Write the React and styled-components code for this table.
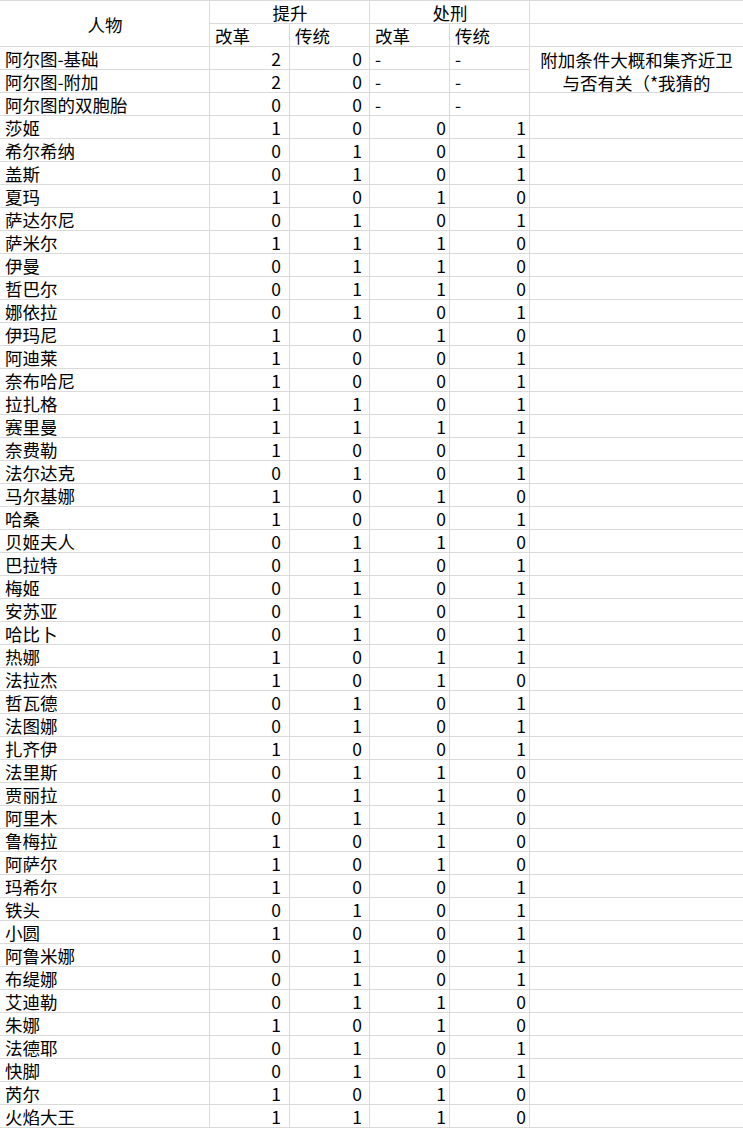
import React from 'react';
import styled, { createGlobalStyle } from 'styled-components';

const GlobalStyle = createGlobalStyle`
  html, body {
    margin: 0;
    padding: 0;
    background: #ffffff;
  }
  body {
    font-family: "Noto Sans CJK SC", "Noto Sans", sans-serif;
    color: #000000;
  }
`;

// 提升改革, 提升传统, 处刑改革, 处刑传统
const rows = [
  ['阿尔图-基础', 2, 0, '-', '-'],
  ['阿尔图-附加', 2, 0, '-', '-'],
  ['阿尔图的双胞胎', 0, 0, '-', '-'],
  ['莎姬', 1, 0, 0, 1],
  ['希尔希纳', 0, 1, 0, 1],
  ['盖斯', 0, 1, 0, 1],
  ['夏玛', 1, 0, 1, 0],
  ['萨达尔尼', 0, 1, 0, 1],
  ['萨米尔', 1, 1, 1, 0],
  ['伊曼', 0, 1, 1, 0],
  ['哲巴尔', 0, 1, 1, 0],
  ['娜依拉', 0, 1, 0, 1],
  ['伊玛尼', 1, 0, 1, 0],
  ['阿迪莱', 1, 0, 0, 1],
  ['奈布哈尼', 1, 0, 0, 1],
  ['拉扎格', 1, 1, 0, 1],
  ['赛里曼', 1, 1, 1, 1],
  ['奈费勒', 1, 0, 0, 1],
  ['法尔达克', 0, 1, 0, 1],
  ['马尔基娜', 1, 0, 1, 0],
  ['哈桑', 1, 0, 0, 1],
  ['贝姬夫人', 0, 1, 1, 0],
  ['巴拉特', 0, 1, 0, 1],
  ['梅姬', 0, 1, 0, 1],
  ['安苏亚', 0, 1, 0, 1],
  ['哈比卜', 0, 1, 0, 1],
  ['热娜', 1, 0, 1, 1],
  ['法拉杰', 1, 0, 1, 0],
  ['哲瓦德', 0, 1, 0, 1],
  ['法图娜', 0, 1, 0, 1],
  ['扎齐伊', 1, 0, 0, 1],
  ['法里斯', 0, 1, 1, 0],
  ['贾丽拉', 0, 1, 1, 0],
  ['阿里木', 0, 1, 1, 0],
  ['鲁梅拉', 1, 0, 1, 0],
  ['阿萨尔', 1, 0, 1, 0],
  ['玛希尔', 1, 0, 0, 1],
  ['铁头', 0, 1, 0, 1],
  ['小圆', 1, 0, 0, 1],
  ['阿鲁米娜', 0, 1, 0, 1],
  ['布缇娜', 0, 1, 0, 1],
  ['艾迪勒', 0, 1, 1, 0],
  ['朱娜', 1, 0, 1, 0],
  ['法德耶', 0, 1, 0, 1],
  ['快脚', 0, 1, 0, 1],
  ['芮尔', 1, 0, 1, 0],
  ['火焰大王', 1, 1, 1, 0],
];

// right padding of the number columns differs in the sheet
const numPad = [8, 7, 3, 3];

const Sheet = styled.div`
  display: grid;
  grid-template-columns: 209px repeat(4, 79px) 1fr;
  grid-auto-rows: 22px;
  gap: 1px;
  padding: 1px 0;
  background: #dadada;
  width: 743px;
  font-size: 17.5px;
  line-height: 21px;
`;

const Cell = styled.div`
  background: #ffffff;
  padding: 1px 4px 0 5px;
  white-space: nowrap;
  min-width: 0;
`;

const GroupHead = styled(Cell)`
  grid-column: span ${(p) => p.$span || 1};
  grid-row: span ${(p) => p.$rows || 1};
  display: flex;
  align-items: center;
  justify-content: center;
`;

const NameCell = styled(Cell)``;

const NumCell = styled(Cell)`
  text-align: right;
  padding-right: ${(p) => p.$pad}px;
`;

const TextCell = styled(Cell)`
  padding-left: 5px;
`;

const NoteCell = styled(Cell)`
  grid-row: span 2;
  white-space: normal;
  display: flex;
  align-items: center;
  justify-content: center;
  text-align: center;
  line-height: 23px;
  padding: 2px 4px 0;
`;

const Empty = styled(Cell)``;

const DataRow = ({ row, index }) => {
  const [name, ...vals] = row;
  return (
    <>
      <NameCell>{name}</NameCell>
      {vals.map((v, i) =>
        typeof v === 'number' ? (
          <NumCell key={i} $pad={numPad[i]}>{v}</NumCell>
        ) : (
          <TextCell key={i}>{v}</TextCell>
        )
      )}
      {index === 0 && <NoteCell>附加条件大概和集齐近卫与否有关（*我猜的</NoteCell>}
      {index > 1 && <Empty />}
    </>
  );
};

export default function App() {
  return (
    <>
      <GlobalStyle />
      <Sheet>
        <GroupHead $rows={2}>人物</GroupHead>
        <GroupHead $span={2}>提升</GroupHead>
        <GroupHead $span={2}>处刑</GroupHead>
        <Empty />
        <NameCell>改革</NameCell>
        <NameCell>传统</NameCell>
        <TextCell>改革</TextCell>
        <TextCell>传统</TextCell>
        <Empty />
        {rows.map((row, i) => (
          <DataRow key={row[0]} row={row} index={i} />
        ))}
      </Sheet>
    </>
  );
}
